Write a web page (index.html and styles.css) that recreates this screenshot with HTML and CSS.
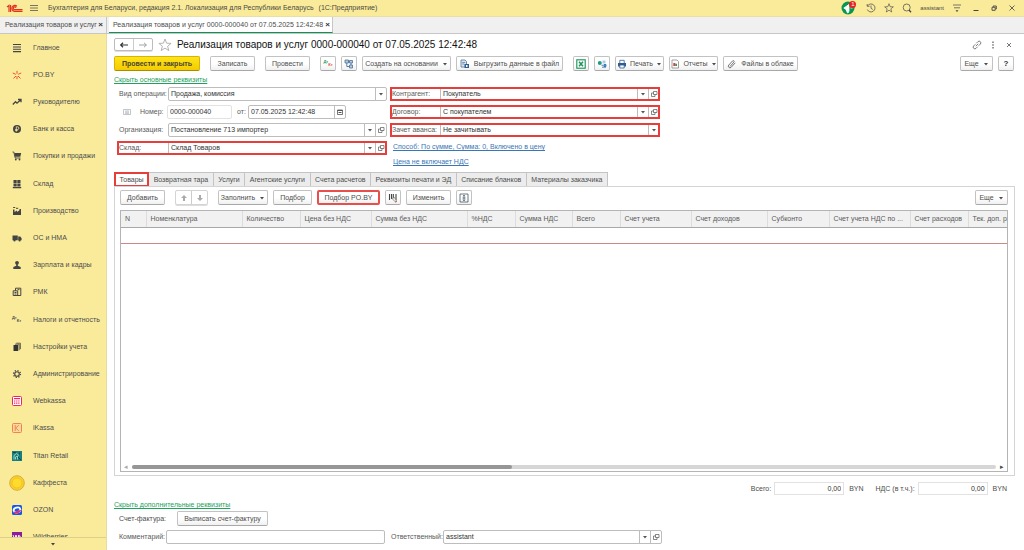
FILE: index.html
```html
<!DOCTYPE html>
<html lang="ru">
<head>
<meta charset="utf-8">
<title>Реализация товаров и услуг</title>
<link rel="stylesheet" href="styles.css">
</head>
<body>
<svg class="defs" aria-hidden="true">
  <symbol id="caret" viewBox="0 0 6 4"><path d="M1 1h4L3 3.400z" fill="currentColor"/></symbol>
  <symbol id="open" viewBox="0 0 8 8"><path d="M3.500 1.500h3.500v3H3.500zM3.500 3H1.500v3.500h3.500V4.500" fill="none" stroke="currentColor" stroke-width=".7"/></symbol>
  <symbol id="star" viewBox="0 0 14 14"><path d="M7 1l1.600 4.200 4.500.2-3.500 2.800 1.200 4.400L7 10.100l-3.800 2.500 1.200-4.400L.9 5.400l4.500-.2z" fill="none" stroke="currentColor"/></symbol>
</svg>
<div class="app">
  <header class="titlebar">
    <svg class="logo" viewBox="0 0 17 9"><g fill="none" stroke="#e0301e" stroke-width="1.2"><path d="M1 3l2-1.600V8M4.600 1v7"/><path d="M11 2.300A3 3 0 1 0 8.500 7.400H16.500M10 3.800A1.400 1.400 0 1 0 8.700 5.700H16.500"/></g></svg>
    <button class="ghost burger" aria-label="Меню"><svg viewBox="0 0 8 8"><path d="M0 1.500h8M0 4h8M0 6.500h8" stroke="#555" stroke-width=".8"/></svg></button>
    <span class="app-name">Бухгалтерия для Беларуси, редакция 2.1. Локализация для Республики Беларусь</span>
    <span class="app-kind">(1С:Предприятие)</span>
    <div class="title-tools">
      <button class="ghost notify" aria-label="Уведомления"><svg viewBox="0 0 14 14"><circle cx="7" cy="7" r="6.500" fill="#0a9650"/><path d="M2.800 7L8 3.500v7zM5 8.500l1.500 3.500 1-.5L6.600 9M9.500 7h2" fill="#fff" stroke="#fff" stroke-width=".8"/></svg><span class="badge">1</span></button>
      <button class="ghost" aria-label="История"><svg viewBox="0 0 10 10"><path d="M1.500 3A4 4 0 1 1 1.300 6.500M1.200 1v2.300h2.300M5 2.500V5.300l1.800 1.200" fill="none" stroke="#555" stroke-width=".8"/></svg></button>
      <button class="ghost" aria-label="Избранное"><svg><use href="#star"/></svg></button>
      <button class="ghost" aria-label="Поиск"><svg viewBox="0 0 10 10"><circle cx="4.700" cy="4.500" r="3.500" fill="none" stroke="#555" stroke-width=".8"/><path d="M7 7l2 2.200" stroke="#444" stroke-width="1.300"/></svg></button>
      <span class="user">assistant</span>
      <button class="ghost" aria-label="Настройки"><svg viewBox="0 0 10 10"><path d="M1 2h8M2 4.800h6" stroke="#555" stroke-width=".8"/><path d="M3.500 7.200h3L5 8.900z" fill="#444"/></svg></button>
      <button class="ghost win" aria-label="Свернуть"><svg viewBox="0 0 8 8"><path d="M1.500 6.500h5" stroke="#444"/></svg></button>
      <button class="ghost win" aria-label="Развернуть"><svg viewBox="0 0 8 8"><path d="M2 3.300h3.200v3H2zM3.200 3V2h3.100v3H5.500" fill="none" stroke="#444" stroke-width=".9"/></svg></button>
      <button class="ghost win" aria-label="Закрыть"><svg viewBox="0 0 8 8"><path d="M1.500 1.500l5 5M6.500 1.500l-5 5" stroke="#444" stroke-width=".8"/></svg></button>
    </div>
  </header>
  <div class="window-tabs">
    <a class="wtab" href="#"><span>Реализация товаров и услуг</span><b>×</b></a>
    <a class="wtab current" href="#"><span>Реализация товаров и услуг 0000-000040 от 07.05.2025 12:42:48</span><b>×</b></a>
  </div>
  <div class="body">
    <aside class="sidebar">
      <nav>
        <a href="#"><i><svg viewBox="0 0 10 10"><path d="M1 1.500h8M1 4h8M1 6.300h8M1 8.600h8" stroke="#444" stroke-width="1.100"/></svg></i>Главное</a>
        <a href="#"><i><svg viewBox="0 0 10 10"><path d="M5 .8v3M5 6.200v3M.8 3l3 1.300M9.200 3l-3 1.300M1.500 8.500L4 6M8.500 8.500L6 6" stroke="#ee5135"/></svg></i>PO.BY</a>
        <a href="#"><i><svg viewBox="0 0 10 10"><path d="M.8 7.500L3.500 4.700 5 6.200 8.500 3M6 2.500h3v2.800" fill="none" stroke="#444" stroke-width="1.300"/></svg></i>Руководителю</a>
        <a href="#"><i><svg viewBox="0 0 10 10"><circle cx="5" cy="5" r="4" fill="#444"/><path d="M4.300 7.700V2.800h1.200a1.300 1.300 0 0 1 0 2.700H3.200M3.200 6.500h2.500" fill="none" stroke="#faeb9b" stroke-width=".8"/></svg></i>Банк и касса</a>
        <a href="#"><i><svg viewBox="0 0 10 10"><path d="M2.200 2h7L8.300 5.800H3z" fill="#444"/><path d="M.5 1h1.300L3.200 7h5.300" fill="none" stroke="#444" stroke-width=".9"/><circle cx="3.800" cy="8.500" r=".9" fill="#444"/><circle cx="7.500" cy="8.500" r=".9" fill="#444"/></svg></i>Покупки и продажи</a>
        <a href="#"><i><svg viewBox="0 0 10 10"><path d="M1.500 1h3.200v3H1.500zM5.300 1h3.200v3H5.300zM1.500 4.600h3.200v2.800H1.500zM5.300 4.600h3.200v2.800H5.300zM.8 8h8.400v1.200H.8z" fill="#444"/></svg></i>Склад</a>
        <a href="#"><i><svg viewBox="0 0 10 10"><path d="M1 9V3.500h1.500V6L5 4.500V6l2.500-1.800V3H9v6z" fill="#444"/><path d="M1.200 1.500h2M4 2.300h2.200" stroke="#444"/></svg></i>Производство</a>
        <a href="#"><i><svg viewBox="0 0 10 10"><path d="M.5 2.500h5.300v4.700H.5zM6.200 3.500H8.300L9.600 5.300v1.900H6.200z" fill="#444"/><circle cx="2.500" cy="7.500" r="1.100" fill="#444"/><circle cx="7.600" cy="7.500" r="1.100" fill="#444"/></svg></i>ОС и НМА</a>
        <a href="#"><i><svg viewBox="0 0 10 10"><circle cx="5" cy="2.800" r="1.900" fill="#444"/><path d="M4.200 4h1.600v1.800L8.700 7v2H1.300V7l2.900-1.200z" fill="#444"/></svg></i>Зарплата и кадры</a>
        <a href="#"><i><svg viewBox="0 0 10 10"><path d="M3.500 3.800V1.200h5.300v7.300H1.200V3.800h4.500v4.700M2.500 5.500h2M2.500 7h2M5.500 2.700h2" fill="none" stroke="#444"/></svg></i>РМК</a>
        <a href="#"><i class="dtkt"><span>Дт</span><span>Кт</span></i>Налоги и отчетность</a>
        <a href="#"><i><svg viewBox="0 0 10 10"><path d="M1.500 3h4.700v6H1.500z" fill="#333"/><path d="M3 2.200h4.200v6M4.200 1.200H8.400v6" fill="none" stroke="#444" stroke-width=".8"/></svg></i>Настройки учета</a>
        <a href="#"><i><svg viewBox="0 0 10 10"><circle cx="5" cy="5" r="2.300" fill="none" stroke="#444" stroke-width="1.100"/><circle cx="5" cy="5" r="3.500" fill="none" stroke="#444" stroke-width="1.200" stroke-dasharray="1.200 1.550"/></svg></i>Администрирование</a>
        <a href="#"><i><svg viewBox="0 0 10 10"><rect x=".5" y=".5" width="9" height="9" rx="1" fill="#fff" stroke="#f2245c"/><path d="M2 2.600h6" stroke="#f2245c" stroke-width="1.200"/><path d="M2 5h6M2 7.200h6" stroke="#f2245c" stroke-width="1.200" stroke-dasharray="1.300 .8"/></svg></i>Webkassa</a>
        <a href="#"><i><svg viewBox="0 0 10 10"><rect x=".5" y=".5" width="9" height="9" rx="1" fill="#fbd9a0" stroke="#f08548"/><path d="M3.200 2v6M6.800 2.200L3.700 5l3.100 2.800" fill="none" stroke="#f08548"/></svg></i>iKassa</a>
        <a href="#"><i><svg viewBox="0 0 10 10"><path d="M0 0h10v10H0z" fill="#16807d"/><path d="M2 8.500V4.500l2.500-2L7 4.500M3.500 8.500V6l2-1v3.500" fill="none" stroke="#b9e0d4" stroke-width=".8"/><path d="M6 6l3 3M1 1.500h3M7.500 1.500v2" stroke="#173c5c"/></svg></i>Titan Retail</a>
        <a href="#"><i class="big"><svg viewBox="0 0 16 16"><circle cx="8" cy="8" r="7.300" fill="#f9ce31" stroke="#d9ae3a"/><circle cx="8" cy="8" r="5" fill="#fddc2d" stroke="#f4c51f"/></svg></i>Каффеста</a>
        <a href="#"><i><svg viewBox="0 0 10 10"><rect width="10" height="10" rx="1.500" fill="#1557e8"/><g transform="rotate(-15 5 5)"><ellipse cx="5" cy="5" rx="4.300" ry="3.300" fill="#fff"/><path d="M.9 5.900h8.200C8.300 7.600 6.800 8.300 5 8.300S1.700 7.600.9 5.900z" fill="#f3265b"/><ellipse cx="5" cy="4.800" rx="2.500" ry="1.300" fill="#1557e8"/></g></svg></i>OZON</a>
        <a href="#"><i><svg viewBox="0 0 10 10"><rect width="10" height="10" fill="#8b1d9b"/><path d="M1 3l1.500 4L4 3l1.300 4L7 3v4h2V5H7" fill="none" stroke="#fff" stroke-width=".9"/></svg></i>Wildberries</a>
      </nav>
      <button class="more" aria-label="Ещё разделы"><svg><use href="#caret"/></svg></button>
    </aside>
    <main>
      <div class="heading">
        <div class="split">
          <button aria-label="Назад"><svg viewBox="0 0 10 8"><path d="M1.500 4h7.500M4 1.800L1.700 4 4 6.200" fill="none" stroke="#333" stroke-width="1.200"/></svg></button>
          <button aria-label="Вперед"><svg viewBox="0 0 10 8"><path d="M1 4h7.500M6 1.800L8.300 4 6 6.200" fill="none" stroke="#999" stroke-width=".9"/></svg></button>
        </div>
        <button class="ghost fav" aria-label="В избранное"><svg><use href="#star"/></svg></button>
        <h1>Реализация товаров и услуг 0000-000040 от 07.05.2025 12:42:48</h1>
        <div class="heading-tools">
          <button class="ghost" aria-label="Ссылка"><svg viewBox="0 0 10 10"><g fill="none" stroke="#777" stroke-width=".9" transform="rotate(-45 5 5)"><path d="M4.300 3.300H2a1.700 1.700 0 0 0 0 3.400h2.300M5.700 3.300H8a1.700 1.700 0 0 1 0 3.400H5.700M3.300 5h3.400"/></g></svg></button>
          <button class="ghost" aria-label="Действия"><svg viewBox="0 0 10 10"><path d="M5 1.500v1.600M5 4.200v1.600M5 6.900v1.600" stroke="#555" stroke-width="1.200"/></svg></button>
          <button class="ghost" aria-label="Закрыть"><svg viewBox="0 0 10 10"><path d="M3 3l4 4M7 3L3 7" stroke="#666" stroke-width=".9"/></svg></button>
        </div>
      </div>

      <div class="commands">
        <div class="group wide">
          <button class="btn primary">Провести и закрыть</button>
          <button class="btn std">Записать</button>
          <button class="btn std">Провести</button>
          <div class="group">
            <button class="btn icon" aria-label="Дт/Кт"><span class="dtkt color"><span>Дт</span><span>Кт</span></span></button>
            <button class="btn icon" aria-label="Структура"><svg viewBox="0 0 10 10"><path d="M1 1h3.500v3H1zM5.500 1.500h3v2.500h-3zM5.500 6h3v3h-3z" fill="#b4c9e2" stroke="#4d7098" stroke-width=".8"/><path d="M2.800 4v3.500h2.700M4.500 2.500h1M7 4v2" fill="none" stroke="#4d7098" stroke-width=".9"/></svg></button>
            <button class="btn create">Создать на основании<svg class="caret"><use href="#caret"/></svg></button>
            <button class="btn export"><svg viewBox="0 0 10 10"><path d="M1 1h4l1.500 1.500V8H1z" fill="#dbe6f3" stroke="#527197" stroke-width=".8"/><path d="M2.200 3.500h3M2.200 5h2" stroke="#527197" stroke-width=".7"/><path d="M4.500 5h4.500v4H4.500z" fill="#315d91"/><path d="M6 6h1.500v2H6z" fill="#fff"/></svg>Выгрузить данные в файл</button>
          </div>
        </div>
        <div class="group second">
          <button class="btn icon" aria-label="Excel"><svg viewBox="0 0 10 10"><rect x=".8" y=".8" width="8.400" height="8.400" fill="#fff" stroke="#159257" stroke-width="1.100"/><path d="M3 2.700l4 4.600M7 2.700L3 7.300" stroke="#159257" stroke-width="1.400"/></svg></button>
          <button class="btn icon" aria-label="Обмен"><svg viewBox="0 0 10 10"><circle cx="2.800" cy="4" r="2" fill="#219b7b"/><path d="M5.500 1.500h3v3h-3z" fill="#a8cdec"/><path d="M4.500 6.300h2M5 8.200h4M7 5.500h2v2H7z" stroke="#2b6ba8" fill="#5a9fd4" stroke-width=".8"/></svg></button>
          <button class="btn print"><svg viewBox="0 0 10 10"><path d="M1 4h8v3.500H1z" fill="#2f5d91"/><path d="M2.800 4V1.300h4.400V4M2.800 6h4.400v3H2.800z" fill="#fff" stroke="#2f5d91" stroke-width=".8"/></svg>Печать<svg class="caret"><use href="#caret"/></svg></button>
          <button class="btn print"><svg viewBox="0 0 10 10"><path d="M2 1h5l1.500 1.500V9H2z" fill="#fff" stroke="#888" stroke-width=".8"/><path d="M3.300 4h2v3h-2z" fill="#d8423b"/><path d="M5.300 4.800h1.700V7H5.300z" fill="#3d8b5d"/></svg>Отчеты<svg class="caret"><use href="#caret"/></svg></button>
          <button class="btn cloud"><svg viewBox="0 0 10 10"><path d="M3 7.500l4-4.500a.9.9 0 0 0-1.300-1.200L1.800 6a1.600 1.600 0 0 0 2.300 2.300L8.300 3.800" fill="none" stroke="#666" stroke-width=".9"/></svg>Файлы в облаке</button>
        </div>
        <div class="group end">
          <button class="btn esc">Еще<svg class="caret"><use href="#caret"/></svg></button>
          <button class="btn icon help" aria-label="Справка">?</button>
        </div>
      </div>

      <a class="toggle" href="#">Скрыть основные реквизиты</a>

      <div class="form">
        <div class="col">
          <div class="row"><label for="op">Вид операции:</label><div class="combo"><input id="op" value="Продажа, комиссия"><button aria-label="Выбрать"><svg class="caret"><use href="#caret"/></svg></button></div></div>
          <div class="row number">
            <svg class="doc" viewBox="0 0 8 6"><path d="M.5.5h7v5h-7zM2 2h4M2 3.200h4M2 4.400h4" fill="none" stroke="#9aa0a8" stroke-width=".6"/></svg>
            <label for="num">Номер:</label><div class="combo pale"><input id="num" value="0000-000040"></div>
            <label class="from" for="date">от:</label><div class="combo date"><input id="date" value="07.05.2025 12:42:48"><button aria-label="Календарь"><svg viewBox="0 0 8 8"><path d="M1.500 2h5v4.500h-5z" fill="none" stroke="#555" stroke-width=".8"/><path d="M1.500 2.500h5M2.500 4.500h3" stroke="#555"/></svg></button></div>
          </div>
          <div class="row"><label for="org">Организация:</label><div class="combo"><input id="org" value="Постановление 713 импортер"><button aria-label="Выбрать"><svg class="caret"><use href="#caret"/></svg></button><button aria-label="Открыть"><svg><use href="#open"/></svg></button></div></div>
          <div class="row marked"><label for="store">Склад:</label><div class="combo"><input id="store" value="Склад Товаров"><button aria-label="Выбрать"><svg class="caret"><use href="#caret"/></svg></button><button aria-label="Открыть"><svg><use href="#open"/></svg></button></div></div>
        </div>
        <div class="col right">
          <div class="row marked"><label for="agent">Контрагент:</label><div class="combo"><input id="agent" value="Покупатель"><button aria-label="Выбрать"><svg class="caret"><use href="#caret"/></svg></button><button aria-label="Открыть"><svg><use href="#open"/></svg></button></div></div>
          <div class="row marked"><label for="deal">Договор:</label><div class="combo"><input id="deal" value="С покупателем"><button aria-label="Выбрать"><svg class="caret"><use href="#caret"/></svg></button><button aria-label="Открыть"><svg><use href="#open"/></svg></button></div></div>
          <div class="row marked"><label for="adv">Зачет аванса:</label><div class="combo"><input id="adv" value="Не зачитывать"><button aria-label="Выбрать"><svg class="caret"><use href="#caret"/></svg></button></div></div>
          <div class="links">
            <a href="#">Способ: По сумме, Сумма: 0, Включено в цену</a>
            <a href="#">Цена не включает НДС</a>
          </div>
        </div>
      </div>

      <div class="tabs" role="tablist">
        <button role="tab" class="active">Товары</button><button role="tab">Возвратная тара</button><button role="tab">Услуги</button><button role="tab">Агентские услуги</button><button role="tab">Счета расчетов</button><button role="tab">Реквизиты печати и ЭД</button><button role="tab">Списание бланков</button><button role="tab">Материалы заказчика</button>
      </div>
      <section class="panel">
        <div class="commands inner">
          <div class="group wide">
            <button class="btn std">Добавить</button>
            <div class="split arrows">
              <button aria-label="Вверх"><svg viewBox="0 0 8 8"><path d="M4 1l3 3H5v3H3V4H1z" fill="#aaa"/></svg></button>
              <button aria-label="Вниз"><svg viewBox="0 0 8 8"><path d="M4 7L1 4h2V1h2v3h2z" fill="#aaa"/></svg></button>
            </div>
            <div class="group">
              <button class="btn fill">Заполнить<svg class="caret"><use href="#caret"/></svg></button>
              <button class="btn pick">Подбор</button>
              <button class="btn pickby">Подбор PO.BY</button>
              <button class="btn icon" aria-label="Штрихкод"><svg viewBox="0 0 10 10"><path d="M1.500 1v6M3.500 1v5M5.300 1v5M8 1v6" stroke="#444" stroke-width="1.100"/><path d="M4 5.500l3 3.200 1.500-.7L6.500 4.500z" fill="#eee" stroke="#777" stroke-width=".7"/><path d="M7 9.300l2-1" stroke="#d76b4c"/></svg></button>
              <button class="btn std">Изменить</button>
              <button class="btn icon" aria-label="Высота строк"><svg viewBox="0 0 10 10"><path d="M1 1h8v8H1z" fill="none" stroke="#456" stroke-width=".8"/><path d="M5 2.200v5.600M3.500 5h3M4 3.300l1-1.100 1 1.100M4 6.700l1 1.100 1-1.100" fill="none" stroke="#345" stroke-width=".7"/></svg></button>
            </div>
          </div>
          <div class="group end"><button class="btn esc">Еще<svg class="caret"><use href="#caret"/></svg></button></div>
        </div>
        <div class="grid">
          <table>
            <colgroup><col class="c25"><col class="c96"><col class="c58"><col class="c71"><col class="c96"><col class="c48"><col class="c57"><col class="c48"><col class="c71"><col class="c76"><col class="c62"><col class="c81"><col class="c58"><col></colgroup>
            <thead><tr><th>N</th><th>Номенклатура</th><th>Количество</th><th>Цена без НДС</th><th>Сумма без НДС</th><th>%НДС</th><th>Сумма НДС</th><th>Всего</th><th>Счет учета</th><th>Счет доходов</th><th>Субконто</th><th>Счет учета НДС по ...</th><th>Счет расходов</th><th>Тек. доп. р</th></tr></thead>
            <tbody><tr><td colspan="14"></td></tr></tbody>
          </table>
          <div class="scroll"><span class="left">◂</span><div class="track"><div class="thumb"></div></div><span>▸</span></div>
        </div>
      </section>

      <div class="totals">
        <label for="sum">Всего:</label><input id="sum" value="0,00"><span>BYN</span>
        <label class="vat" for="vat">НДС (в т.ч.):</label><input id="vat" value="0,00"><span>BYN</span>
      </div>

      <a class="toggle" href="#">Скрыть дополнительные реквизиты</a>
      <div class="invoice"><span>Счет-фактура:</span><button class="btn">Выписать счет-фактуру</button></div>
      <div class="footer">
        <label for="note">Комментарий:</label><div class="combo"><input id="note"></div>
        <label class="resp" for="resp">Ответственный:</label><div class="combo"><input id="resp" value="assistant"><button aria-label="Выбрать"><svg class="caret"><use href="#caret"/></svg></button><button aria-label="Открыть"><svg><use href="#open"/></svg></button></div>
      </div>
    </main>
  </div>
</div>
</body>
</html>
```
FILE: styles.css
```css
* { box-sizing: border-box; }
body { margin: 0; font: 7px/10px "Liberation Sans", Arial, sans-serif; color: #4c4c4c; background: #fff; }
button, input { font: inherit; color: inherit; margin: 0; padding: 0; min-width: 0; }
a { color: inherit; text-decoration: none; }
svg { display: block; flex: none; }
.defs { position: absolute; width: 0; height: 0; }
.app { height: 100vh; display: flex; flex-direction: column; overflow: hidden; }
.ghost { border: 0; background: none; display: flex; align-items: center; justify-content: center; width: 10px; height: 10px; }
.ghost svg { width: 10px; height: 10px; color: #555; }

.titlebar { flex: none; height: 17px; display: flex; align-items: center; padding: 0 8px 0 6px; background: #faeb9b; border-bottom: 1px solid #e8dea6; color: #4a4a40; }
.logo { width: 17px; height: 9px; }
.burger { margin: 0 9px 0 6px; }
.burger svg { width: 8px; height: 8px; }
.app-kind { margin-left: 5px; }
.title-tools { margin-left: auto; display: flex; align-items: center; gap: 8px; }
.notify { position: relative; width: 14px; height: 14px; margin-right: 3px; }
.notify svg { width: 14px; height: 14px; }
.badge { position: absolute; top: 0; right: -1px; width: 7px; height: 7px; border-radius: 50%; background: #e8231f; color: #fff; font-size: 6px; line-height: 7px; }
.user { font-size: 6px; }
.win { width: 8px; margin-left: 2px; }
.win svg { width: 8px; height: 8px; }

.window-tabs { flex: none; height: 17px; display: flex; background: #f0f0f0; border-bottom: 1px solid #c6c6c6; }
.wtab { display: flex; align-items: center; justify-content: space-between; padding: 0 3px 0 5px; width: 107px; border-right: 1px solid #c6c6c6; }
.wtab b { font-size: 8px; color: #333; }
.wtab.current { width: 224px; margin-left: 2px; padding: 0 2px 0 4px; border-bottom: 1px solid #0a9650; background: #fff; }

.body { flex: 1; min-height: 0; display: flex; }
.sidebar { position: relative; flex: none; width: 107px; background: #faeb9b; border-right: 1px solid #e6dca0; overflow: hidden; }
.sidebar nav { height: calc(100% + 1px); display: flex; flex-direction: column; }
.sidebar nav a { flex: 1; display: flex; align-items: center; gap: 8px; padding-left: 8px; white-space: nowrap; }
.sidebar i { width: 17px; display: flex; justify-content: center; font-style: normal; }
.sidebar i svg { width: 10px; height: 10px; }
.sidebar i.big svg { width: 16px; height: 16px; }
.dtkt { font-size: 4px; line-height: 4px; font-weight: bold; }
.dtkt span:last-child { padding-top: 3px; }
.dtkt.color { display: flex; color: #1d9a58; }
.dtkt.color span:last-child { color: #e0443a; }
.more { position: absolute; left: 0; right: 0; bottom: 0; height: 13px; border: 0; border-top: 1px solid #ddd08a; background: #faeb9b; display: flex; justify-content: center; align-items: center; }
.more svg { width: 6px; height: 4px; color: #444; }

main { flex: 1; min-width: 0; display: flex; flex-direction: column; padding: 4px 10px 6px 7px; }
.heading { flex: none; display: flex; align-items: center; height: 13px; }
.split { display: flex; border: 1px solid #bcbcbc; border-radius: 2px; height: 13px; width: 39px; box-shadow: 0 1px 0 #ddd; }
.split button { flex: 1; border: 0; background: none; display: flex; align-items: center; justify-content: center; }
.split button + button { border-left: 1px solid #ccc; }
.split svg { width: 10px; height: 8px; }
.fav { width: 12px; height: 12px; margin: 0 6px; }
.fav svg { width: 14px; height: 14px; color: #b4b4b4; }
h1 { margin: 0; font-size: 10px; line-height: 13px; font-weight: normal; color: #111; white-space: nowrap; }
.heading-tools { margin-left: auto; display: flex; gap: 6px; }

.commands { flex: none; display: flex; margin-top: 5px; height: 15px; }
.commands.inner { margin-top: 3px; }
.group { display: flex; gap: 5px; }
.group.wide { gap: 10px; }
.group.second { margin-left: 10px; }
.group.end { margin-left: auto; }
.btn { display: flex; align-items: center; justify-content: center; gap: 4px; height: 15px; border: 1px solid #c2c2c2; border-bottom-color: #a8a8a8; border-radius: 2px; background: linear-gradient(#fff 50%, #f0f0f0); white-space: nowrap; }
.btn svg { width: 10px; height: 10px; }
.btn .caret { width: 6px; height: 4px; }
.btn.icon { width: 16px; }
.btn.std { width: 45px; }
.btn.primary { width: 86px; background: linear-gradient(#ffe319, #f3cc00); border-color: #d5b40a; border-bottom-color: #a98d00; font-weight: bold; color: #4a4530; }
.btn.create { width: 89px; }
.btn.export { width: 107px; }
.btn.print { width: 49px; gap: 3px; }
.btn.cloud { width: 75px; }
.btn.esc { width: 33px; }
.btn.help { font-weight: bold; font-size: 8px; color: #333; }
.btn.fill { width: 50px; }
.btn.pick { width: 39px; }
.btn.pickby { width: 63px; border: 2px solid #e84f4c; }

.toggle { flex: none; align-self: flex-start; margin-top: 4px; color: #23a15c; text-decoration: underline; }

.form { flex: none; display: flex; gap: 3px; margin-top: 2px; }
.col { width: 273px; display: flex; flex-direction: column; gap: 4px; padding-left: 3px; }
.col.right { width: 270px; padding: 0; }
.row { display: flex; align-items: center; height: 14px; }
.row label { width: 51px; padding-left: 2px; white-space: nowrap; color: #5a5a5a; }
.combo { flex: 1; min-width: 0; display: flex; height: 14px; border: 1px solid #bdbdbd; border-radius: 2px; background: #fff; color: #333; }
.combo input { flex: 1; border: 0; background: none; padding: 0 2px; outline: 0; width: 20px; }
.combo button { flex: none; width: 11px; border: 0; border-left: 1px solid #bdbdbd; background: none; display: flex; align-items: center; justify-content: center; color: #555; }
.combo svg { width: 8px; height: 8px; }
.combo .caret { width: 6px; height: 4px; }
.marked { outline: 2px solid #e53e3b; outline-offset: -2px; }
.number .doc { width: 8px; height: 6px; margin-left: 6px; }
.number label { width: 36px; padding-left: 9px; }
.number .pale { flex: none; width: 65px; border-color: #e2e2e2; }
.number label.from { width: 16px; padding-left: 5px; }
.number .date { flex: none; width: 98px; }
.right .row label { width: 50px; }
.links { display: flex; flex-direction: column; align-items: flex-start; gap: 5px; padding: 1px 0 0 3px; color: #3a76b5; }
.links a { text-decoration: underline; }

.tabs { flex: none; display: flex; width: 494px; height: 14px; margin-top: 5px; }
.tabs button { flex: 1 1 auto; height: 15px; padding: 0 4px; border: 1px solid #c4c4c4; border-left-width: 0; background: #ececec; white-space: nowrap; }
.tabs .active { padding: 0 3px; background: #fff; border: 2px solid #e53e3b; }
.panel { flex: 1; min-height: 0; display: flex; flex-direction: column; border: 1px solid #d4d4d4; padding: 0 6px 3px 5px; margin-right: -1px; }
.split.arrows { width: 33px; height: 15px; border-color: #d4d4d4; }
.arrows svg { width: 8px; height: 8px; }
.grid { flex: 1; min-height: 0; margin-top: 5px; border: 1px solid #b4b4b4; display: flex; flex-direction: column; justify-content: space-between; overflow: hidden; }
table { width: 100%; table-layout: fixed; border-collapse: collapse; }
th { height: 16px; padding: 0 4px; text-align: left; font-weight: normal; background: #f1f1f1; border-right: 1px solid #dcdcdc; border-bottom: 1px solid #a8a8a8; white-space: nowrap; overflow: hidden; color: #5a5a5a; }
th:last-child { border-right: 0; }
td { height: 16px; padding: 0; border-bottom: 1px solid #c98a88; }
.c25 { width: 25px; } .c96 { width: 96px; } .c58 { width: 58px; } .c71 { width: 71px; } .c48 { width: 48px; }
.c57 { width: 57px; } .c76 { width: 76px; } .c62 { width: 62px; } .c81 { width: 81px; }
.scroll { display: flex; align-items: center; gap: 4px; height: 9px; padding: 0 3px; }
.scroll .left { color: #aaa; }
.track { flex: 1; height: 4px; border-radius: 2px; background: #d6d6d6; }
.thumb { width: 44%; height: 4px; border-radius: 2px; background: #969696; }

.totals { flex: none; display: flex; align-items: center; justify-content: flex-end; margin-top: 6px; padding-right: 7px; height: 13px; }
.totals input { width: 70px; height: 13px; margin: 0 5px 0 3px; padding: 0 2px; border: 1px solid #e2e2e2; text-align: right; color: #333; }
.totals .vat { margin-left: 12px; }
.totals ~ .toggle { margin-top: 5px; }
.invoice { flex: none; display: flex; align-items: center; height: 15px; margin-top: 1px; padding-left: 5px; }
.invoice span { width: 58px; }
.invoice .btn { width: 91px; }
.footer { flex: none; display: flex; align-items: center; margin-top: 4px; padding-left: 5px; }
.footer label { width: 47px; color: #5a5a5a; }
.footer .combo { flex: none; width: 219px; }
.footer .resp { width: 58px; padding-left: 6px; }
```
